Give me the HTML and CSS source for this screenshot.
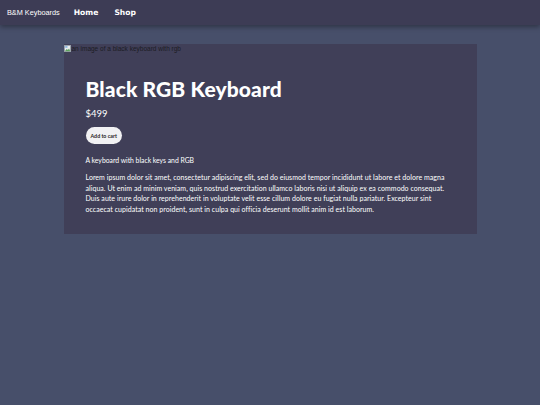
FILE: index.html
```html
<!DOCTYPE html>
<html lang="en">

<head>
    <meta charset="UTF-8">
    <meta name="viewport" content="width=device-width, initial-scale=1.0">
    <title>Black RGB Keyboard - B&amp;M Keyboards</title>
    <link rel="stylesheet" href="styles.css">
</head>

<body>

    <!-- Navigation Bar -->
    <div class="navbar">
        <a href="index.html" class="brand">B&amp;M Keyboards</a>
        <a href="index.html" class="nav-link">Home</a>
        <a href="shop.html" class="nav-link">Shop</a>
    </div>

    <!-- Product Section -->
    <div class="product">
        <div class="product-image">
            <svg class="broken-icon" width="9" height="9" viewBox="0 0 9 9">
                <rect x="0.5" y="0.5" width="8" height="8" fill="#e8ecef" stroke="#9aa3ab" />
                <path d="M1 8 L3.5 5 L5 6.5 L6.5 4.5 L8 8 Z" fill="#5fa35f" />
                <rect x="1.5" y="1.5" width="3" height="2" fill="#7fb0de" />
            </svg>
            <span>an image of a black keyboard with rgb</span>
        </div>
        <div class="product-info">
            <h1>Black RGB Keyboard</h1>
            <p class="price">$499</p>
            <button class="cart-btn">Add to cart</button>
            <p class="short-desc">A keyboard with black keys and RGB</p>
            <p class="long-desc">Lorem ipsum dolor sit amet, consectetur adipiscing elit, sed do eiusmod tempor incididunt ut labore et dolore magna aliqua. Ut enim ad minim veniam, quis nostrud exercitation ullamco laboris nisi ut aliquip ex ea commodo consequat. Duis aute irure dolor in reprehenderit in voluptate velit esse cillum dolore eu fugiat nulla pariatur. Excepteur sint occaecat cupidatat non proident, sunt in culpa qui officia deserunt mollit anim id est laborum.</p>
        </div>
    </div>

</body>

</html>
```

FILE: styles.css
```css
body {
    font-family: Lato, "Open Sans", sans-serif;
    background: #474f6a;
    margin: 0;
    color: #ffffff;
}

/* Navigation Bar */
.navbar {
    background-color: #3d3c55;
    display: flex;
    align-items: center;
    height: 25px;
    padding: 0 7px;
    box-shadow: 0 2px 5px rgba(0, 0, 0, 0.35);
}

.navbar a {
    color: white;
    text-decoration: none;
}

.brand {
    font-family: "Liberation Sans", Arial, sans-serif;
    font-size: 7.3px;
    margin-right: 14px;
    color: #e6e6ee;
}

.nav-link {
    font-family: "DejaVu Sans", sans-serif;
    font-weight: bold;
    font-size: 7.6px;
    margin-right: 16px;
}

/* Product Card */
.product {
    width: 413px;
    margin: 19px auto 0;
    background: #403f58;
    padding-bottom: 20px;
}

.product-image {
    display: flex;
    align-items: center;
    height: 8px;
    font-family: "Liberation Sans", Arial, sans-serif;
    font-size: 6.5px;
    color: #1c1c24;
}

.broken-icon {
    width: 7px;
    height: 7px;
    margin-right: 1px;
}

.product-info {
    padding: 0 20px 0 22px;
}

h1 {
    margin: 26px 0 0;
    font-size: 21px;
    font-weight: 900;
    line-height: 22px;
    letter-spacing: 0.1px;
}

.price {
    margin: 8px 0 0;
    font-size: 9.5px;
}

.cart-btn {
    margin-top: 8px;
    background: #f1f1f3;
    border: none;
    border-radius: 9px;
    padding: 0 5px;
    height: 17px;
    font-family: Lato, sans-serif;
    font-weight: bold;
    font-size: 5.3px;
    color: #222;
    cursor: pointer;
}

.short-desc {
    margin: 12px 0 0;
    font-size: 6.8px;
}

.long-desc {
    margin: 8px 0 0;
    font-size: 7px;
    line-height: 10.6px;
    letter-spacing: 0.04px;
}
```
